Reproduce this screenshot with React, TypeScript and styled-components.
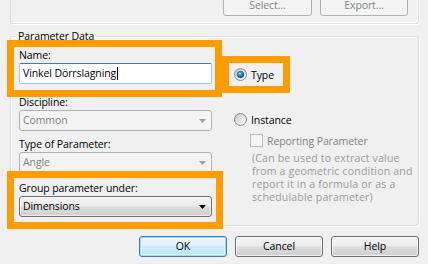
import React from "react";
import styled, { createGlobalStyle, css } from "styled-components";

const Global = createGlobalStyle`
  html, body { margin: 0; padding: 0; background: #f0f0f0; }
  body {
    font-family: "Open Sans", "Noto Sans", "Liberation Sans", sans-serif;
    font-size: 10.5px;
    letter-spacing: -0.1px;
    color: #000;
  }
  * { box-sizing: border-box; }
`;

const Page = styled.div`
  position: relative;
  width: 428px;
  height: 264px;
  overflow: hidden;
  background: #f0f0f0;
  display: flex;
  flex-direction: column;
`;

const TopGroup = styled.div`
  margin: -8px 9px 0 10px;
  height: 32px;
  border: 1px solid #d5dfe5;
  border-top: none;
  border-radius: 0 0 3px 3px;
  box-shadow: inset -1px -1px 0 #fff, 1px 1px 0 #fff;
  display: flex;
  justify-content: flex-end;
  align-items: flex-end;
  gap: 8px;
  padding: 0 10px 7px 0;
`;

const Btn = styled.button<{ $w: number; $variant?: "disabled" | "default" | "normal" }>`
  width: ${(p) => p.$w}px;
  height: 21px;
  padding: 0 0 1px;
  font: inherit;
  letter-spacing: inherit;
  border-radius: 3px;
  cursor: default;
  ${(p) =>
    p.$variant === "disabled"
      ? css`
          border: 1px solid #adb2b5;
          background: #f4f4f4;
          color: #838383;
        `
      : p.$variant === "default"
      ? css`
          border: 1px solid #3c7fb1;
          color: #000;
          background: linear-gradient(#eaf6fd 0%, #dff2fc 45%, #cdebfa 50%, #bfe3f5 100%);
          box-shadow: inset 0 0 0 1px #8fe0fb, inset 0 0 0 2px rgba(255, 255, 255, 0.5);
        `
      : css`
          border: 1px solid #707070;
          color: #000;
          background: linear-gradient(#f2f2f2 0%, #ebebeb 48%, #dddddd 52%, #cfcfcf 100%);
          box-shadow: inset 0 0 0 1px rgba(255, 255, 255, 0.7);
        `}
`;

const Fieldset = styled.fieldset`
  margin: 5px 9px 0 10px;
  padding: 0 0 7px 0;
  border: 1px solid #d5dfe5;
  border-radius: 3px;
  box-shadow: inset 1px 1px 0 #fff, 1px 1px 0 #fff;
  height: 197px;
  min-width: 0;
`;

const Legend = styled.legend`
  margin-left: 5px;
  padding: 0 2px;
  line-height: 14px;
  color: #000;
`;

const Body = styled.div`
  display: grid;
  grid-template-columns: 193px 1fr;
  column-gap: 22px;
  padding: 4px 0 0 8px;
`;

const Column = styled.div`
  display: flex;
  flex-direction: column;
`;

const Field = styled.div<{ $top: number }>`
  display: flex;
  flex-direction: column;
  margin-top: ${(p) => p.$top}px;
`;

const Label = styled.label`
  display: block;
  height: 15px;
  line-height: 15px;
  white-space: nowrap;
`;

const TextInput = styled.div`
  height: 21px;
  border: 1px solid #a4c9e3;
  border-top-color: #3d7bad;
  border-radius: 2px;
  background: #fff;
  padding: 0 3px;
  display: flex;
  align-items: center;
  line-height: 19px;
`;

const Caret = styled.span`
  display: inline-block;
  width: 1px;
  height: 13px;
  background: #000;
  margin-left: 1px;
`;

const Combo = styled.div<{ $disabled?: boolean }>`
  height: 21px;
  border-radius: 3px;
  padding: 0 5px 0 3px;
  display: flex;
  align-items: center;
  justify-content: space-between;
  line-height: 19px;
  ${(p) =>
    p.$disabled
      ? css`
          border: 1px solid #adb2b5;
          background: #f4f4f4;
          color: #838383;
        `
      : css`
          border: 1px solid #707070;
          color: #000;
          background: linear-gradient(#f2f2f2 0%, #ebebeb 48%, #dddddd 52%, #cfcfcf 100%);
          box-shadow: inset 0 0 0 1px rgba(255, 255, 255, 0.6);
        `}
`;

const Arrow = styled.svg`
  display: block;
  flex: none;
`;

const Choice = styled.div<{ $top: number; $indent?: number; $muted?: boolean }>`
  display: flex;
  align-items: center;
  gap: 4px;
  height: 13px;
  margin-top: ${(p) => p.$top}px;
  margin-left: ${(p) => p.$indent ?? 0}px;
  color: ${(p) => (p.$muted ? "#838383" : "#000")};
  white-space: nowrap;
`;

const CheckBox = styled.span`
  display: block;
  width: 13px;
  height: 13px;
  border: 1px solid #bcbcbc;
  background: #f4f4f4;
  flex: none;
`;

const Note = styled.p`
  margin: 5px 0 0 18px;
  line-height: 13px;
  letter-spacing: 0.2px;
  color: #9a9a9a;
  white-space: nowrap;
`;

const ButtonRow = styled.div`
  display: flex;
  justify-content: flex-end;
  gap: 8px;
  margin: 10px 9px 0 0;
`;

const Highlight = styled.div<{ $x: number; $y: number; $w: number; $h: number }>`
  position: absolute;
  left: ${(p) => p.$x}px;
  top: ${(p) => p.$y}px;
  width: ${(p) => p.$w}px;
  height: ${(p) => p.$h}px;
  border: 7px solid #ff9c00;
  pointer-events: none;
`;

function Radio({ checked }: { checked?: boolean }) {
  const id = checked ? "rc" : "ru";
  return (
    <svg width="13" height="13" viewBox="0 0 13 13" style={{ flex: "none", display: "block" }}>
      <defs>
        <linearGradient id={`${id}-o`} x1="0" y1="0" x2="1" y2="1">
          <stop offset="0" stopColor="#c3c3c3" />
          <stop offset="1" stopColor="#f8f8f8" />
        </linearGradient>
        <linearGradient id={`${id}-i`} x1="0" y1="0" x2="1" y2="1">
          <stop offset="0" stopColor="#cfcfcf" />
          <stop offset="1" stopColor="#fbfbfb" />
        </linearGradient>
        <radialGradient id={`${id}-d`} cx="0.4" cy="0.35" r="0.7">
          <stop offset="0" stopColor="#9fe1ff" />
          <stop offset="0.45" stopColor="#2a8fd1" />
          <stop offset="1" stopColor="#0a3a6a" />
        </radialGradient>
      </defs>
      <circle cx="6.5" cy="6.5" r="6" fill={`url(#${id}-o)`} stroke="#8a8a8a" strokeWidth="1" />
      <circle cx="6.5" cy="6.5" r="4.3" fill={`url(#${id}-i)`} />
      {checked && <circle cx="6.5" cy="6.5" r="3.3" fill={`url(#${id}-d)`} stroke="#1b4a7a" strokeWidth="0.6" />}
    </svg>
  );
}

function ComboArrow({ disabled }: { disabled?: boolean }) {
  return (
    <Arrow width="7" height="4" viewBox="0 0 7 4">
      <path d="M0 0H7L3.5 4Z" fill={disabled ? "#a0a0a0" : "#000"} />
    </Arrow>
  );
}

export default function App() {
  return (
    <Page>
      <Global />
      <TopGroup>
        <Btn $w={89} $variant="disabled">Select...</Btn>
        <Btn $w={88} $variant="disabled">Export...</Btn>
      </TopGroup>

      <Fieldset>
        <Legend>Parameter Data</Legend>
        <Body>
          <Column>
            <Field $top={1}>
              <Label>Name:</Label>
              <TextInput>
                Vinkel Dörrslagning
                <Caret />
              </TextInput>
            </Field>
            <Field $top={11}>
              <Label>Discipline:</Label>
              <Combo $disabled>
                Common
                <ComboArrow disabled />
              </Combo>
            </Field>
            <Field $top={6}>
              <Label>Type of Parameter:</Label>
              <Combo $disabled>
                Angle
                <ComboArrow disabled />
              </Combo>
            </Field>
            <Field $top={8}>
              <Label>Group parameter under:</Label>
              <Combo>
                Dimensions
                <ComboArrow />
              </Combo>
            </Field>
          </Column>

          <Column>
            <Choice $top={21}>
              <Radio checked />
              Type
            </Choice>
            <Choice $top={32}>
              <Radio />
              Instance
            </Choice>
            <Choice $top={8} $indent={16} $muted>
              <CheckBox />
              Reporting Parameter
            </Choice>
            <Note>
              (Can be used to extract value
              <br />
              from a geometric condition and
              <br />
              report it in a formula or as a
              <br />
              schedulable parameter)
            </Note>
          </Column>
        </Body>
      </Fieldset>

      <ButtonRow>
        <Btn $w={88} $variant="default">OK</Btn>
        <Btn $w={88}>Cancel</Btn>
        <Btn $w={88}>Help</Btn>
      </ButtonRow>

      <Highlight $x={7} $y={40} $w={215} $h={57} />
      <Highlight $x={222} $y={56} $w={68} $h={37} />
      <Highlight $x={7} $y={171} $w={216} $h={58} />
    </Page>
  );
}
